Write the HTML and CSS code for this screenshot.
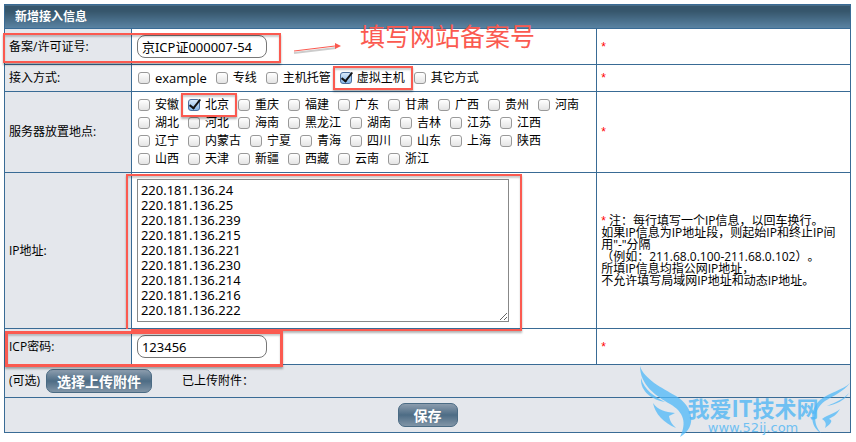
FILE: index.html
```
<!DOCTYPE html>
<html lang="zh-CN">
<head>
  <meta charset="UTF-8">
  <title>新增接入信息</title>
  <link rel="stylesheet" href="styles.css">
</head>
<body>
  <form class="page">
    <table class="form-table">
      <colgroup>
        <col class="col-label">
        <col class="col-field">
        <col class="col-note">
      </colgroup>
      <thead>
        <tr class="row-title"><th colspan="3">新增接入信息</th></tr>
      </thead>
      <tbody>
        <tr class="row-input">
          <th class="mark-row"><label for="licence">备案/许可证号:</label></th>
          <td><input class="text-input" type="text" id="licence" value="京ICP证000007-54"></td>
          <td class="note"><span class="required">*</span></td>
        </tr>
        <tr class="row-mode">
          <th>接入方式:</th>
          <td>
            <div class="checks">
              <label class="latin"><input type="checkbox">example</label>
              <label><input type="checkbox">专线</label>
              <label><input type="checkbox">主机托管</label>
              <label class="mark"><input type="checkbox" checked>虚拟主机</label>
              <label><input type="checkbox">其它方式</label>
            </div>
          </td>
          <td class="note"><span class="required">*</span></td>
        </tr>
        <tr class="row-place">
          <th>服务器放置地点:</th>
          <td>
            <div class="checks">
              <label><input type="checkbox">安徽</label>
              <label class="mark"><input type="checkbox" checked>北京</label>
              <label><input type="checkbox">重庆</label>
              <label><input type="checkbox">福建</label>
              <label><input type="checkbox">广东</label>
              <label><input type="checkbox">甘肃</label>
              <label><input type="checkbox">广西</label>
              <label><input type="checkbox">贵州</label>
              <label><input type="checkbox">河南</label>
            </div>
            <div class="checks">
              <label><input type="checkbox">湖北</label>
              <label><input type="checkbox">河北</label>
              <label><input type="checkbox">海南</label>
              <label><input type="checkbox">黑龙江</label>
              <label><input type="checkbox">湖南</label>
              <label><input type="checkbox">吉林</label>
              <label><input type="checkbox">江苏</label>
              <label><input type="checkbox">江西</label>
            </div>
            <div class="checks">
              <label><input type="checkbox">辽宁</label>
              <label><input type="checkbox">内蒙古</label>
              <label><input type="checkbox">宁夏</label>
              <label><input type="checkbox">青海</label>
              <label><input type="checkbox">四川</label>
              <label><input type="checkbox">山东</label>
              <label><input type="checkbox">上海</label>
              <label><input type="checkbox">陕西</label>
            </div>
            <div class="checks">
              <label><input type="checkbox">山西</label>
              <label><input type="checkbox">天津</label>
              <label><input type="checkbox">新疆</label>
              <label><input type="checkbox">西藏</label>
              <label><input type="checkbox">云南</label>
              <label><input type="checkbox">浙江</label>
            </div>
          </td>
          <td class="note"><span class="required">*</span></td>
        </tr>
        <tr class="row-ip">
          <th><label for="ip-list">IP地址:</label></th>
          <td>
            <div class="mark-area">
              <textarea id="ip-list" rows="9">220.181.136.24
220.181.136.25
220.181.136.239
220.181.136.215
220.181.136.221
220.181.136.230
220.181.136.214
220.181.136.216
220.181.136.222</textarea>
            </div>
          </td>
          <td class="note"><span class="required">*</span> 注：每行填写一个IP信息，以回车换行。<br>如果IP信息为IP地址段，则起始IP和终止IP间<br>用"-"分隔<br>（例如：211.68.0.100-211.68.0.102）。<br>所填IP信息均指公网IP地址，<br>不允许填写局域网IP地址和动态IP地址。</td>
        </tr>
        <tr class="row-input">
          <th class="mark-row thick"><label for="icp-password">ICP密码:</label></th>
          <td><input class="text-input" type="text" id="icp-password" value="123456"></td>
          <td class="note"><span class="required">*</span></td>
        </tr>
        <tr class="row-upload">
          <td colspan="3">
            <div class="upload">
              <span>(可选)</span>
              <button type="button" class="btn">选择上传附件</button>
              <span class="uploaded">已上传附件：</span>
            </div>
          </td>
        </tr>
        <tr class="row-save">
          <td colspan="3"><button type="submit" class="btn btn-save">保存</button></td>
        </tr>
      </tbody>
    </table>

    <div class="callout">
      <svg width="52" height="14" viewBox="0 0 52 14">
        <path d="M5 12L47 7" stroke="#000" stroke-opacity="0.2" stroke-width="2" fill="none"/>
        <path d="M5 10L46 5" stroke="#fb5a50" fill="none"/>
        <path d="M46 2L52 5L46 8Z" fill="#fb5a50"/>
      </svg>
      <span>填写网站备案号</span>
    </div>

    <div class="watermark">
      <svg class="wings" width="218" height="76" viewBox="0 0 218 76">
        <path d="M4 3C8 16 26 25 40 33C57 43 62 64 44 74C51 60 48 49 34 41C20 33 4 22 4 3Z"/>
        <path d="M5 15C8 27 19 34 29 39C17 37 4 29 5 15Z"/>
        <path d="M17 40C22 47 29 49 39 50L33 53C34 59 37 62 40 65C28 60 19 51 17 40Z"/>
        <path d="M214 20C207 29 197 33 189 38C178 46 176 60 185 70C174 64 173 47 184 37C194 29 207 27 214 20Z"/>
        <path d="M213 30C208 38 201 41 191 43C200 39 208 36 213 30Z"/>
        <path d="M204 46C200 53 196 54 193 56C197 57 196 60 189 65C191 60 189 58 186 56C193 51 198 51 204 46Z"/>
      </svg>
      <span class="wm-name">我爱IT技术网</span>
      <span class="wm-url">www.52ij.com</span>
    </div>
  </form>
</body>
</html>
```
FILE: styles.css
```
*, *::before, *::after {
  box-sizing: border-box;
}
body {
  margin: 0;
  padding: 4px 5px 4px 4px;
  background: #fff;
  color: #000;
  font-family: "Open Sans", "Noto Sans CJK SC", sans-serif;
  font-size: 12px;
  line-height: 18px;
  text-spacing-trim: space-all;
}
.page {
  position: relative;
  margin: 0;
}
.form-table {
  width: 100%;
  table-layout: fixed;
  border-collapse: collapse;
}
.col-label { width: 15%; }
.col-field { width: 55%; }
.col-note { width: 30%; }
th, td {
  border: 1px solid #396b95;
  padding: 0 5px;
  text-align: left;
  vertical-align: middle;
}
th {
  padding: 0 4px;
  background: #e4e7ec;
  font-weight: normal;
}
.row-title th {
  height: 24px;
  padding: 0 10px;
  background: linear-gradient(#36566c 25%, #5a84a4);
  color: #fff;
  font-weight: bold;
}
.row-input { height: 36px; }
.row-mode { height: 27px; }
.row-place { height: 81px; }
.row-ip { height: 156px; }
.row-upload { height: 33px; }
.row-save { height: 35px; }
.row-upload td {
  padding: 0 4px;
  background: #e4e7ec;
}
.row-save td {
  background: #e4e7ec;
  text-align: center;
}
.note {
  padding: 0 4px;
  line-height: 12px;
}
.required {
  color: #f00;
  font-family: "Liberation Sans", sans-serif;
}

.text-input {
  display: block;
  width: 130px;
  height: 23px;
  padding: 0 4px;
  border: 1px solid #777;
  border-radius: 8px;
  background: #fff;
  font-family: "Noto Sans", "Noto Sans CJK SC", sans-serif;
  font-size: 13px;
}
textarea {
  display: block;
  width: 372px;
  max-width: 100%;
  height: 143px;
  padding: 3px;
  border: 1px solid #888;
  background: #fff;
  font-family: "Noto Sans", "Noto Sans CJK SC", sans-serif;
  font-size: 13px;
  line-height: 15px;
}
.checks {
  display: flex;
  gap: 8px;
}
.checks label {
  display: flex;
  align-items: center;
  gap: 5px;
  white-space: nowrap;
}
.checks .latin { font-size: 13px; }
input[type="checkbox"] {
  appearance: none;
  width: 12px;
  height: 12px;
  margin: 0 0 0 1px;
  border: 1px solid #999;
  border-radius: 3px;
  background: linear-gradient(#fff, #e4e4e4);
}
input[type="checkbox"]:checked {
  position: relative;
  border-color: #4c6f9e;
  background: linear-gradient(#d8e9fa, #86b6e8);
}
input[type="checkbox"]:checked::after {
  content: "";
  position: absolute;
  left: 3px;
  top: -3px;
  width: 6px;
  height: 12px;
  border: solid #111;
  border-width: 0 2px 2px 0;
  transform: rotate(38deg);
}

.upload {
  display: flex;
  align-items: center;
  gap: 6px;
}
.uploaded { margin-left: 24px; }
.btn {
  height: 24px;
  padding: 0 10px;
  border: 1px solid #4a6b84;
  border-radius: 7px;
  background: linear-gradient(#8c9dae, #4d6c85 50%, #8195a7);
  color: #fff;
  font-family: "Noto Sans CJK SC", sans-serif;
  font-size: 14px;
  font-weight: bold;
  line-height: 20px;
}
.btn-save { padding: 0 15px; }

/* red frames round the fields to fill in */
.mark, .mark-area, .mark-row { position: relative; }
.mark::after, .mark-area::after, .mark-row::after {
  content: "";
  position: absolute;
  border: 2px solid #fb5a50;
  box-shadow: 0 2px 2px rgba(0, 0, 0, 0.3), inset 0 2px 2px rgba(0, 0, 0, 0.2);
  pointer-events: none;
}
.mark::after { inset: -3px -8px -3px -6px; }
.mark-area { width: 372px; }
.mark-area::after { inset: -5px -13px -9px -11px; }
.mark-row::after {
  z-index: 1;
  left: -2px;
  top: 4px;
  width: 278px;
  height: 30px;
}
.mark-row.thick::after {
  left: 0;
  top: 2px;
  height: 36px;
  border-width: 3px;
}
.callout {
  position: absolute;
  left: 285px;
  top: 11px;
  display: flex;
  align-items: center;
  gap: 19px;
  color: #fb5a50;
  font-family: "Noto Sans CJK SC", sans-serif;
  font-size: 25px;
  line-height: 36px;
}
.callout svg { margin-top: 26px; }

.watermark {
  position: absolute;
  right: -3px;
  bottom: -6px;
  width: 218px;
  height: 76px;
  padding: 30px 0 0 16px;
  color: #6fc0f2;
  text-align: center;
  pointer-events: none;
}
.wings {
  position: absolute;
  left: 0;
  top: 0;
  fill: #4fb8f8;
  fill-opacity: 0.75;
}
.wm-name, .wm-url { display: block; }
.wm-name {
  font-family: "Noto Sans CJK SC", sans-serif;
  font-size: 22px;
  font-weight: bold;
  line-height: 28px;
}
.wm-url {
  font-family: "DejaVu Sans", sans-serif;
  font-size: 13px;
  line-height: 14px;
}
```
